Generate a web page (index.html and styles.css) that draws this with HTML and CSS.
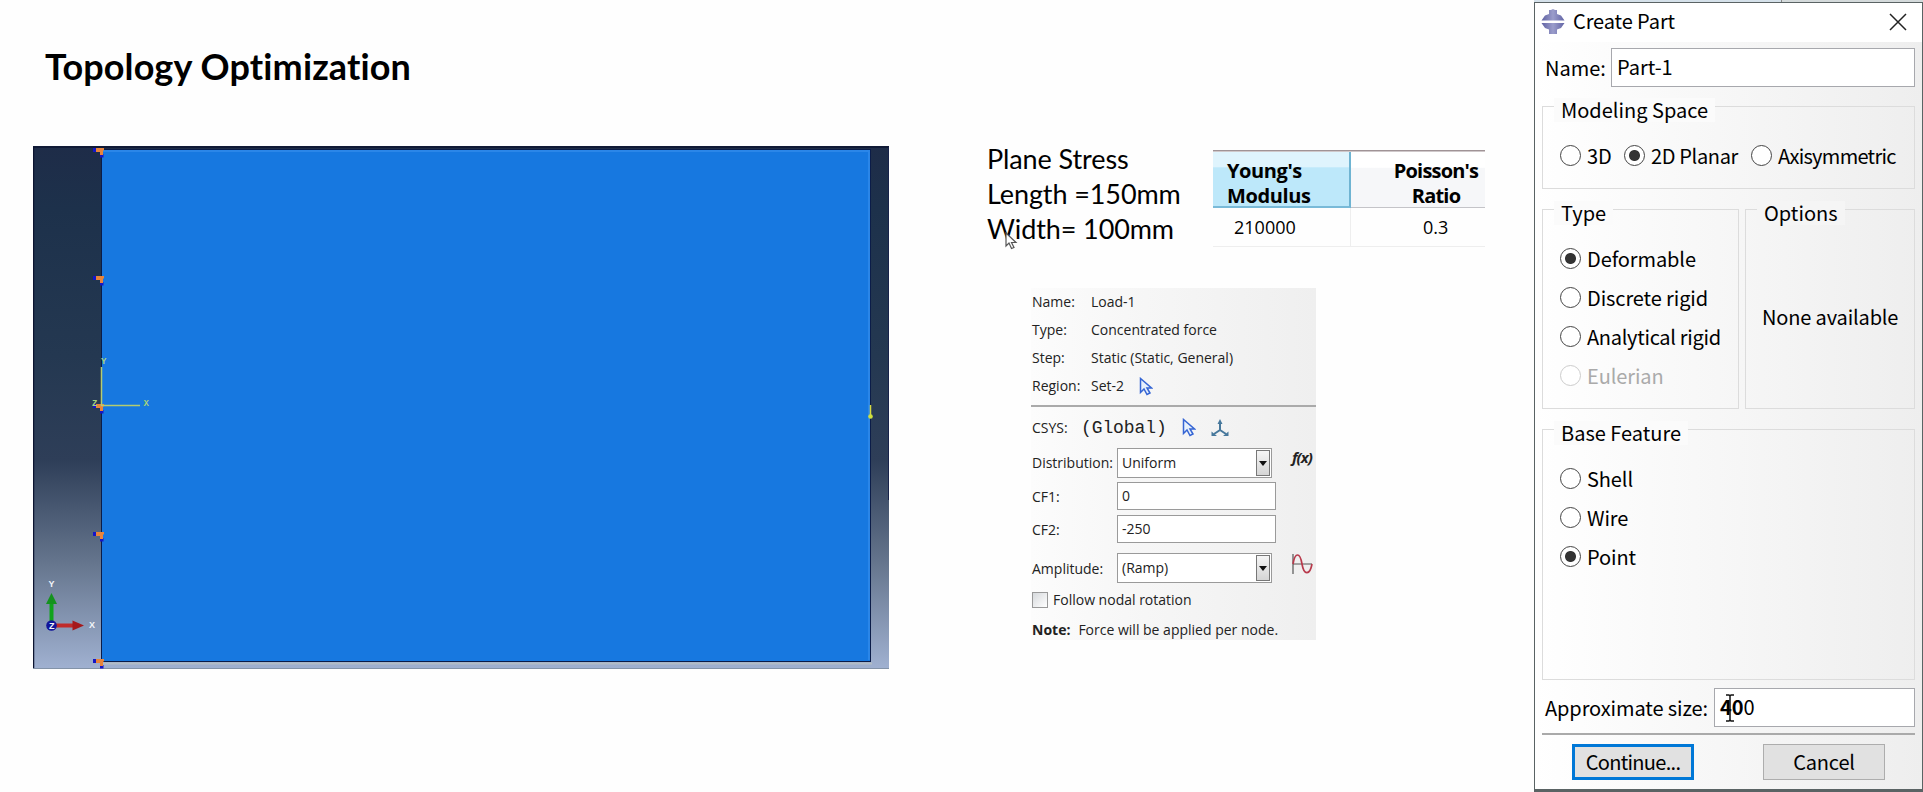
FILE: index.html
```
<!DOCTYPE html>
<html lang="en">
<head>
<meta charset="utf-8">
<title>Topology Optimization</title>
<link rel="stylesheet" href="styles.css">
</head>
<body>
<main class="slide">
  <section class="model-col">
    <h1 class="title"><span>Topology Optimization</span></h1>
    <svg class="viewport" width="856" height="523" viewBox="33 146 856 523">
      <defs>
        <linearGradient id="sky" x1="0" y1="0" x2="0" y2="1">
          <stop offset="0" stop-color="#1e2c48"/><stop offset=".12" stop-color="#1d314b"/><stop offset=".4" stop-color="#243851"/>
          <stop offset=".6" stop-color="#2e3e58"/><stop offset=".8" stop-color="#66768e"/><stop offset="1" stop-color="#a0b1d1"/>
        </linearGradient>
        <g id="bc"><path d="M-8-3h3v4h-3zM-1 3h3.500v3.500h-3.500z" fill="#1416c8"/><path d="M-5-3h8v2.500H2V4H-1V1h-4z" fill="#e8843c"/></g>
      </defs>
      <rect x="33" y="146" width="856" height="523" fill="url(#sky)"/>
      <path d="M33.500 668V147H889" fill="none" stroke="#0c1430" stroke-width="1.500"/>
      <path d="M888.500 147V500" stroke="#17224a"/>
      <path d="M33 668.500H889" stroke="#8393a8"/>
      <path d="M102 663.500H872" stroke="#b3bdc6" stroke-width="2"/>
      <rect x="101.500" y="149.500" width="769" height="512" fill="#1778e0" stroke="#0b1c48"/>
      <path d="M103 151H869V660" fill="none" stroke="#2b86e8" stroke-width="2"/>
      <path d="M870.500 405V416" stroke="#d6d840" stroke-width="1.500"/><circle cx="870.500" cy="416.500" r="2.300" fill="#cfe03c"/>
      <use href="#bc" x="101" y="151"/><use href="#bc" x="101" y="279"/><use href="#bc" x="101" y="407"/><use href="#bc" x="101" y="535"/><use href="#bc" x="101" y="662"/>
      <path d="M101.500 367V405.500H140" fill="none" stroke="#b4cc70" stroke-width="1.500"/>
      <g class="datum"><text x="101" y="364">Y</text><text x="143.500" y="406">X</text><text x="92" y="406">Z</text></g>
      <path d="M51.500 622V602" stroke="#10a31c" stroke-width="4"/><path d="M46 604l5.500-11 5.500 11z" fill="#14921f"/>
      <path d="M56 625.500H74" stroke="#c02b2a" stroke-width="4"/><path d="M72.500 620.500l11.500 5-11.500 5z" fill="#a5191c"/>
      <circle cx="51.500" cy="625.500" r="5.300" fill="#11159a"/>
      <g class="triad"><text x="48.500" y="587">Y</text><text x="89" y="628">X</text><text x="49" y="628.500">Z</text></g>
    </svg>
  </section>
  <section class="data-col">
    <div class="facts-row">
      <div class="facts">
        <div><span class="f1">Plane Stress</span></div><div><span class="f2">Length =150mm</span></div><div><span class="f3">Width= 100mm</span></div>
        <svg class="pointer" width="13" height="18" viewBox="0 0 13 18"><path d="M1 1v13l3-3 2.500 5.500 2.500-1-2.500-5H11z" fill="#fff" stroke="#555" stroke-width="1.200"/></svg>
      </div>
      <div class="material">
        <div class="th young"><span>Young's<br>Modulus</span></div><div class="th poisson"><span>Poisson's<br>Ratio</span></div>
        <div class="td v1"><span>210000</span></div><div class="td v2"><span>0.3</span></div>
      </div>
    </div>
    <div class="load">
      <div class="info">
        <span>Name:</span><span>Load-1</span>
        <span>Type:</span><span class="force">Concentrated force</span>
        <span>Step:</span><span>Static (Static, General)</span>
        <span>Region:</span><span class="with-icon">Set-2
          <svg width="14" height="19" viewBox="0 0 14 19"><path d="M1.500 1.500v14l3.500-3.500 3 5.500 3-1.500-3-5h4.500z" fill="#e6f0fc" stroke="#3565d4" stroke-width="1.500"/></svg></span>
      </div>
      <div class="csys"><span class="lab">CSYS:</span><span class="mono">(Global)</span>
        <svg width="14" height="19" viewBox="0 0 14 19"><path d="M1.500 1.500v14l3.500-3.500 3 5.500 3-1.500-3-5h4.500z" fill="#e6f0fc" stroke="#3565d4" stroke-width="1.500"/></svg>
        <svg class="axes" width="18" height="18" viewBox="0 0 18 18"><path d="M9 3v8L3 15M9 11l6 4" fill="none" stroke="#47789c" stroke-width="2"/><path d="M6.500 5L9 0l2.500 5zM.5 12.500v4.500h5.500zM17.500 12.500v4.500h-5.500z" fill="#47789c"/></svg>
      </div>
      <div class="field combo-row"><span class="lab">Distribution:</span><div class="combo"><span>Uniform</span><i></i></div><em>f(x)</em></div>
      <div class="field cf1"><span class="lab">CF1:</span><div class="input">0</div></div>
      <div class="field cf2"><span class="lab">CF2:</span><div class="input">-250</div></div>
      <div class="field amp"><span class="lab">Amplitude:</span><div class="combo"><span>(Ramp)</span><i></i></div>
        <svg width="21" height="20" viewBox="0 0 21 20"><path d="M1 0v20M1 10h19" stroke="#555" stroke-width="1.200"/><path d="M1 10C3-2 8-2 10 10s8 11 10 0" fill="none" stroke="#b83a4c" stroke-width="1.700"/></svg>
      </div>
      <div class="follow"><i></i><span>Follow nodal rotation</span></div>
      <div class="note"><b>Note:</b><span>Force will be applied per node.</span></div>
    </div>
  </section>
</main>
<aside class="dialog-wrap">
  <div class="strip"><i></i><b></b></div>
  <div class="dialog">
    <header>
      <svg width="24" height="26" viewBox="0 0 24 26"><defs><linearGradient id="gear" x1="0" x2="1" y1="0" y2="0"><stop offset="0" stop-color="#5f61a2"/><stop offset=".5" stop-color="#9b9dcb"/><stop offset="1" stop-color="#6264a5"/></linearGradient></defs><path d="M8 1h2l2-1 2 1h2v4l4 1.500 3.500 5H.5l3.500-5L8 5zM.5 14h23l-3.500 5-4 1.500V25H8v-4.500L4 19z" fill="url(#gear)"/></svg>
      <span class="caption">Create Part</span>
      <svg class="close" width="18" height="18" viewBox="0 0 18 18"><path d="M1 1l16 16M17 1L1 17" stroke="#222" stroke-width="1.500"/></svg>
    </header>
    <div class="pane">
      <div class="line name"><label>Name:</label><div class="box">Part-1</div></div>
      <div class="group space"><div class="legend">Modeling Space</div>
        <div class="radios-h">
          <span class="radio"><i></i><span>3D</span></span><span class="radio"><i class="on"></i><span class="planar">2D Planar</span></span><span class="radio"><i></i><span class="axi">Axisymmetric</span></span>
        </div>
      </div>
      <div class="pair">
        <div class="group type"><div class="legend">Type</div>
          <div class="radios">
            <span class="radio"><i class="on"></i><span>Deformable</span></span><span class="radio"><i></i><span>Discrete rigid</span></span>
            <span class="radio"><i></i><span class="analytical">Analytical rigid</span></span><span class="radio off"><i></i><span>Eulerian</span></span>
          </div>
        </div>
        <div class="group options"><div class="legend">Options</div><div class="none">None available</div></div>
      </div>
      <div class="group base"><div class="legend">Base Feature</div>
        <div class="radios">
          <span class="radio"><i></i><span>Shell</span></span><span class="radio"><i></i><span>Wire</span></span><span class="radio"><i class="on"></i><span>Point</span></span>
        </div>
      </div>
      <div class="line size"><label>Approximate size:</label><div class="box"><b>40</b>0
        <svg class="ibeam" width="10" height="28" viewBox="0 0 10 28"><path d="M1 1h3l1 1 1-1h3M5 2v24M1 27h3l1-1 1 1h3" fill="none" stroke="#111" stroke-width="1.500"/></svg></div></div>
      <div class="buttons"><div class="btn primary">Continue...</div><div class="btn">Cancel</div></div>
    </div>
  </div>
</aside>
</body>
</html>
```
FILE: styles.css
```
* { box-sizing: border-box; }
body { margin: 0; width: 1923px; height: 792px; display: flex; background: #fefefe; color: #000; overflow: hidden; }
svg { display: block; flex: none; }
h1 { margin: 0; }
i, em { font-style: normal; }

.slide { display: flex; width: 1534px; font-family: "Open Sans", sans-serif; }
.model-col { width: 987px; padding-left: 33px; }
.title { height: 146px; padding: 42px 0 0 12px; font: 700 36px/48px Lato, sans-serif; white-space: nowrap; font-variant-ligatures: none; letter-spacing: .13px; }
.datum { font: 700 9px "Liberation Mono", monospace; fill: #a6d27c; }
.triad { font: 700 9px "Liberation Sans", sans-serif; fill: #f2f5fa; }

.data-col { width: 547px; padding-top: 141px; }
.facts-row { display: flex; height: 147px; }
.facts { position: relative; width: 226px; font: 27px/35px Lato, sans-serif; letter-spacing: -.1px; white-space: nowrap; }
.pointer { position: absolute; left: 18px; top: 91px; }
.material { display: grid; grid-template-columns: 138px 134px; grid-template-rows: 56px 39px; align-self: start; width: 272px; margin-top: 9px; padding-top: 2px; background: linear-gradient(#a09396, #a09396) 0 0 / 272px 1.500px no-repeat; }
.th { font-weight: 700; font-size: 20px; line-height: 25px; letter-spacing: -.4px; border-bottom: 1px solid #c4c4c8; white-space: nowrap; padding-top: 6px; }
.young { background: linear-gradient(#dff4fd 0 28%, #bde8fa 29% 100%); border-right: 2px solid #6fb4d2; border-bottom: 2px solid #79bad8; padding-left: 14px; }
.poisson { text-align: center; padding-left: 36px; letter-spacing: -.8px; background: linear-gradient(#fff 0 28%, #f6f7f9 29%); }
.td { font-size: 18px; line-height: 39px; border-bottom: 1px solid #eee; white-space: nowrap; }
.v1 { padding-left: 21px; border-right: 1px solid #eee; }
.v2 { padding-left: 72px; }

.load { width: 285px; height: 352px; margin-left: 44px; padding-left: 1px; font-size: 14px; color: #222; white-space: nowrap; background: linear-gradient(90deg, #fcfcfc, #f6f6f6 40%, #efefef); }
.info { display: grid; grid-template-columns: 59px 1fr; grid-auto-rows: 28px; line-height: 28px; height: 119px; border-bottom: 2px solid #aaa; margin-left: -1px; padding-left: 1px; }
.with-icon { display: flex; align-items: center; gap: 15px; }
.csys { display: flex; align-items: center; height: 41px; }
.mono { font: 18px "Liberation Mono", monospace; letter-spacing: -.1px; margin: 0 15px 0 14px; }
.axes { margin-left: 15px; }
.lab { width: 85px; flex: none; }
.csys .lab { width: 35px; }
.field { display: flex; align-items: center; height: 29px; }
.combo, .input { height: 30px; border: 1px solid #9a9a9a; background: #fff; }
.combo { display: flex; justify-content: space-between; width: 155px; line-height: 27px; padding-left: 4px; }
.combo i { width: 14px; margin: 1px 1px; border: 1px solid #777; background: linear-gradient(#f5f5f5, #d5d5d5); position: relative; }
.combo i::after { content: ""; position: absolute; left: 2px; top: 10px; border: 4px solid transparent; border-top: 5px solid #111; border-bottom: 0; }
.input { width: 159px; height: 28px; line-height: 26px; padding-left: 4px; }
.field em { font: italic 700 15px "Open Sans", sans-serif; margin: -12px 0 0 20px; letter-spacing: -1px; }
.cf1 { margin-top: 5px; height: 28px; }
.cf2 { margin-top: 5px; height: 28px; }
.amp { margin-top: 10px; height: 30px; }
.amp > svg { margin: -9px 0 0 20px; }
.follow { display: flex; align-items: center; height: 33px; gap: 5px; }
.follow i { width: 16px; height: 16px; border: 1px solid #999; background: linear-gradient(135deg, #d6d9dc, #fff); }
.note { display: flex; gap: 8px; height: 19px; margin-top: 4px; line-height: 19px; }

.dialog-wrap { width: 389px; font: 20px "Noto Sans CJK SC", sans-serif; }
.strip { display: flex; height: 2px; background: #d4dadb; }
.strip i { width: 247px; background: #d5e1ea; }
.strip b { width: 1px; background: #888; }
.dialog { height: 790px; border: 1px solid #5a6364; border-bottom-width: 3px; background: linear-gradient(90deg, #fff, #eee); white-space: nowrap; }
.dialog header { display: flex; align-items: center; height: 39px; padding: 0 15px 2px 6px; background: #fff; }
.caption { margin: -2px 0 0 8px; letter-spacing: -.1px; }
.close { margin-left: auto; }
.pane { padding: 6px 7px 0 7px; }
.line { display: flex; align-items: center; height: 39px; justify-content: space-between; padding-left: 3px; }
.box { position: relative; height: 39px; line-height: 36px; padding-left: 5px; border: 1px solid #a7a8ad; background: #fff; }
.name .box { width: 304px; }
.size .box { width: 201px; }
.size { letter-spacing: -.1px; }
.ibeam { position: absolute; left: 10px; top: 5px; }
.group { border: 1px solid #dcdcdc; }
.legend { width: max-content; height: 24px; margin: -9px 0 0 11px; padding: 0 7px; line-height: 24px; background: #fbfbfb; }
.space { height: 83px; margin-top: 19px; }
.radios-h { display: flex; padding: 23px 0 0 17px; }
.radio { display: flex; align-items: center; height: 21px; gap: 6px; }
.radios-h .radio { width: 64px; }
.radios-h .radio + .radio { width: 127px; }
.planar { letter-spacing: -.35px; }
.axi { letter-spacing: -.7px; }
.analytical { letter-spacing: -.3px; }
.radio i { width: 21px; height: 21px; border: 1.500px solid #444; border-radius: 50%; background: #fff; flex: none; }
.radio .on { background: radial-gradient(circle, #333 0 5px, #fff 6px); }
.off { color: #aaa; }
.radio.off i { border-color: #ccc; }
.pair { display: flex; justify-content: space-between; margin-top: 20px; }
.type { width: 197px; height: 200px; }
.options { width: 170px; height: 200px; }
.options .legend { background: #f5f5f5; }
.radios { display: flex; flex-direction: column; gap: 18px; padding: 23px 0 0 17px; letter-spacing: -.1px; }
.none { padding-left: 16px; margin-top: 77px; line-height: 30px; letter-spacing: -.15px; }
.base { height: 251px; margin-top: 20px; }
.size { margin-top: 8px; }
.buttons { display: flex; gap: 69px; height: 48px; margin-top: 6px; border-top: 2px solid #aaa; padding: 9px 0 0 30px; }
.btn { width: 122px; height: 36px; border: 1px solid #adadad; background: #e1e1e1; text-align: center; line-height: 34px; letter-spacing: -.2px; }
.primary { border: 3px solid #0078d7; line-height: 30px; letter-spacing: -.7px; }
```
